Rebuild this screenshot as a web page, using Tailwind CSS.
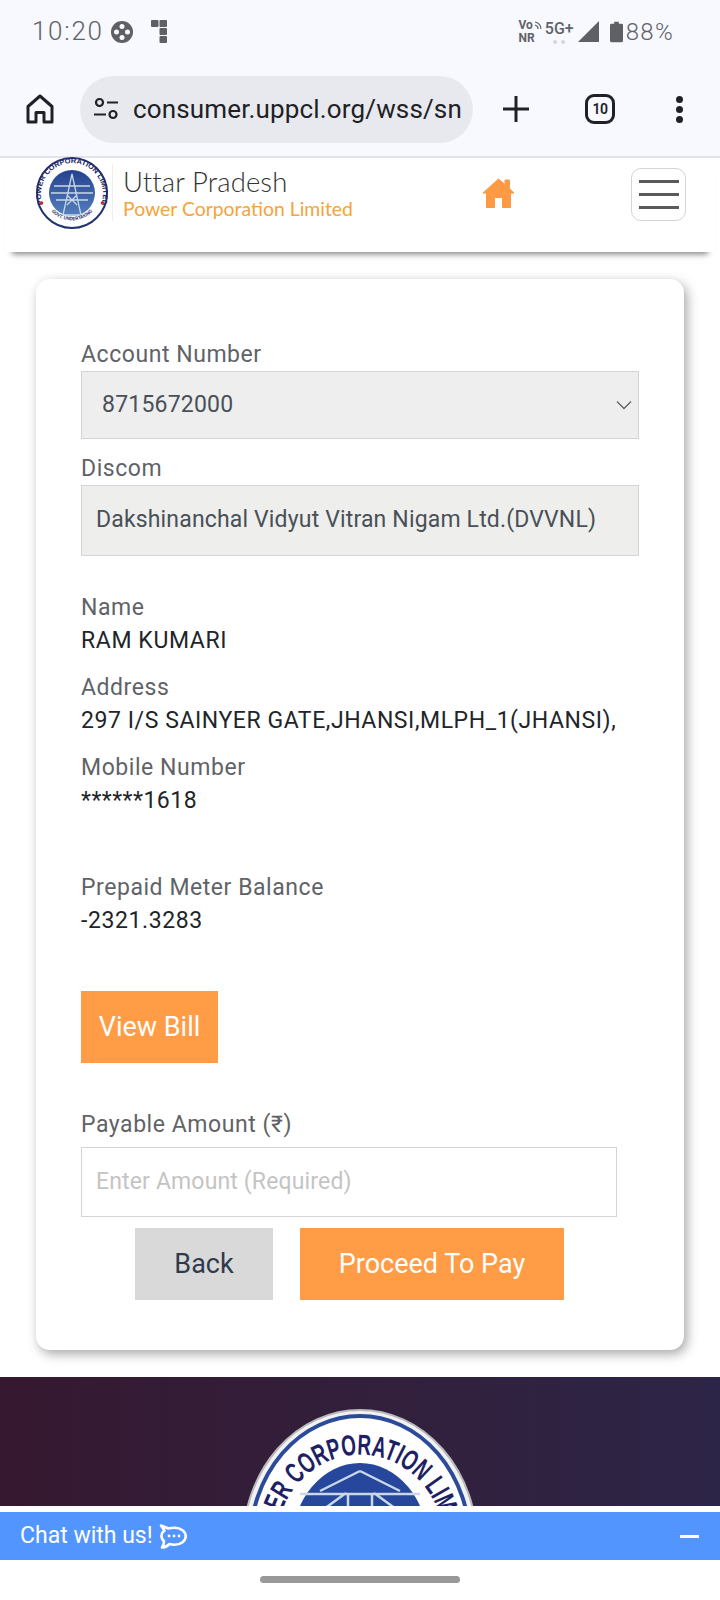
<!DOCTYPE html>
<html lang="en">
<head>
    <meta charset="UTF-8">
    <meta name="viewport" content="width=device-width, initial-scale=1.0">
    <title>Uttar Pradesh Power Corporation Limited</title>
    <script src="https://cdn.jsdelivr.net/npm/@tailwindcss/browser@4"></script>
</head>
<body class="relative h-[1600px] w-[720px] overflow-hidden bg-white font-['Roboto',sans-serif] text-[#212529]">

    <!-- phone status bar + browser toolbar -->
    <div class="h-[158px] border-b-2 border-[#e2e2e8] bg-[#f8f8ff]">
        <div class="flex h-[62px] items-center justify-between pl-[32px] pr-[46px] pt-[1px] text-[#606368]">
            <div class="flex items-center">
                <span class="text-[26px] font-light tracking-[1.700px]">10:20</span>
                <svg class="ml-[7px]" width="22" height="22" viewBox="0 0 22 22">
                    <circle cx="11" cy="11" r="11" fill="#5f6064"/>
                    <circle cx="11" cy="5.500" r="2.500" fill="#f8f8ff"/><circle cx="5.500" cy="11" r="2.500" fill="#f8f8ff"/>
                    <circle cx="16.500" cy="11" r="2.500" fill="#f8f8ff"/><circle cx="11" cy="16.500" r="2.500" fill="#f8f8ff"/>
                </svg>
                <svg class="ml-[18px]" width="16" height="23" viewBox="0 0 16 23" fill="#5f6064">
                    <rect x="0" y="0" width="7.500" height="7" rx="1"/><rect x="8.500" y="0" width="7.500" height="7" rx="1"/>
                    <rect x="8.500" y="8" width="7.500" height="7" rx="1"/><rect x="8.500" y="16" width="7.500" height="7" rx="1"/>
                </svg>
            </div>
            <div class="flex items-center">
                <div class="flex flex-col text-[12px] font-bold leading-[13px]">
                    <span class="flex items-center">Vo<svg class="ml-[1px]" width="8" height="9" viewBox="0 0 8 9" fill="none" stroke="#606368" stroke-width="1.200"><path d="M1 4a4 4 0 0 1 3 4M1 1a7 7 0 0 1 6 7"/></svg></span>
                    <span>NR</span>
                </div>
                <div class="ml-[3px] flex flex-col items-center">
                    <span class="text-[16px] font-medium leading-[17px]">5G+</span>
                    <span class="mt-[3px] flex gap-[4px]"><i class="h-[4px] w-[4px] rounded-full bg-[#d4d4da]"></i><i class="h-[4px] w-[4px] rounded-full bg-[#d4d4da]"></i></span>
                </div>
                <svg class="ml-[4px]" width="21" height="21" viewBox="0 0 21 21"><path d="M0 21 21 0V21Z" fill="#5f6064"/></svg>
                <svg class="ml-[11px]" width="13" height="22" viewBox="0 0 14 22"><path d="M4.500 0h5v2h3a1.500 1.500 0 0 1 1.500 1.500V20.500A1.500 1.500 0 0 1 12.500 22h-11A1.500 1.500 0 0 1 0 20.500V3.500A1.500 1.500 0 0 1 1.500 2h3Z" fill="#5f6064"/></svg>
                <span class="ml-[3px] text-[24px] font-light tracking-[1.300px]">88%</span>
            </div>
        </div>
        <div class="flex h-[94px] items-center">
            <svg class="ml-[26px]" width="28" height="30" viewBox="0 0 28 30" fill="none" stroke="#202124" stroke-width="3" stroke-linejoin="round">
                <path d="M2 12.500 14 2 26 12.500V28H18V18.500H10V28H2Z"/>
            </svg>
            <div class="ml-[26px] flex h-[67px] w-[393px] items-center rounded-full bg-[#e8e9ee] pl-[13px]">
                <svg width="26" height="26" viewBox="0 0 26 26" fill="none" stroke="#202124" stroke-width="2.200">
                    <circle cx="6.500" cy="6.500" r="3.500"/><path d="M14 6.500H25M1 18.500H13"/><circle cx="20" cy="18.500" r="3.500"/>
                </svg>
                <span class="ml-[14px] whitespace-nowrap text-[26px] tracking-[0.150px] text-[#202124]">consumer.uppcl.org/wss/sn</span>
            </div>
            <svg class="ml-[29px]" width="28" height="28" viewBox="0 0 28 28" stroke="#202124" stroke-width="3"><path d="M14 1V27M1 14H27"/></svg>
            <div class="ml-[55px] flex h-[30px] w-[30px] items-center justify-center rounded-[9px] border-[3px] border-[#202124] text-[14px] font-semibold tracking-[-0.5px] text-[#202124]">10</div>
            <div class="ml-[61px] flex flex-col gap-[3px]">
                <i class="h-[7px] w-[7px] rounded-full bg-[#202124]"></i><i class="h-[7px] w-[7px] rounded-full bg-[#202124]"></i><i class="h-[7px] w-[7px] rounded-full bg-[#202124]"></i>
            </div>
        </div>
    </div>

    <!-- site header -->
    <header class="relative mx-[6px] flex h-[94px] items-start bg-white shadow-[0_8px_6px_-6px_rgba(0,0,0,0.5)]">
        <svg class="ml-[30px] mt-[-1px]" width="72" height="72" viewBox="0 0 72 72">
            <defs>
                <path id="hdrTop" d="M7 48A31 31 0 1 1 65 48"/>
                <path id="hdrBottom" d="M11 48a28 28 0 0 0 50 0"/>
                <linearGradient id="hdrSeal" x1="0" x2="0" y1="0" y2="1"><stop offset="0" stop-color="#24418f"/><stop offset="1" stop-color="#5580bd"/></linearGradient>
            </defs>
            <circle cx="36" cy="36" r="35" fill="#fff" stroke="#23326f" stroke-width="2"/>
            <circle cx="36" cy="36" r="23" fill="url(#hdrSeal)"/>
            <path d="M36 17 27 58H45ZM18 29H54M15 36H57M20 43H52M31 38 41 48M41 38 31 48" fill="none" stroke="#c9d8e8" stroke-width="1.300"/>
            <text font-family="Liberation Sans" font-size="7" font-weight="700" fill="#23265f"><textPath href="#hdrTop" startOffset="50%" text-anchor="middle" textLength="118" lengthAdjust="spacingAndGlyphs">POWER CORPORATION LIMITED</textPath></text>
            <text font-family="Liberation Sans" font-size="5" font-weight="700" fill="#23265f"><textPath href="#hdrBottom" startOffset="50%" text-anchor="middle" textLength="46" lengthAdjust="spacingAndGlyphs">GOVT. UNDERTAKING</textPath></text>
            <circle cx="5.500" cy="46" r="1.800" fill="#c02b2b"/><circle cx="66.500" cy="46" r="1.800" fill="#c02b2b"/>
        </svg>
        <div class="ml-[4px] mt-[6px] w-[370px] border-l border-[#eeeeee] pl-[10px] font-['Lato',sans-serif]">
            <div class="text-[27.500px] font-light leading-[36px] tracking-[0.100px] text-[#333333]">Uttar Pradesh</div>
            <div class="mt-[-3px] text-[19.400px] leading-[24px] text-[#f6a33c]">Power Corporation Limited</div>
        </div>
        <svg class="mt-[20px]" width="33" height="30" viewBox="0 0 33 30" fill="#ff9a44" stroke="#ff9a44" stroke-linejoin="round">
            <path d="M16.500 1 23 6.500V2H27.500V10.500L32 15H28.500V29.500H20.500V19.500H12.500V29.500H4.500V15H1Z"/>
        </svg>
        <div class="ml-[116px] mt-[10px] flex h-[53px] w-[55px] flex-col items-center justify-center gap-[10px] rounded-[10px] border border-[#d4d4d4]">
            <i class="h-[3px] w-[40px] bg-[#5a5a5a]"></i><i class="h-[3px] w-[40px] bg-[#5a5a5a]"></i><i class="h-[3px] w-[40px] bg-[#5a5a5a]"></i>
        </div>
    </header>

    <!-- account card -->
    <main class="mx-[36px] mt-[27px] h-[1071px] rounded-[14px] bg-white px-[45px] pt-[60px] shadow-[3px_4px_12px_rgba(0,0,0,0.35)]">
        <label class="block text-[23px] leading-[32px] tracking-[0.550px] text-[#5f6368]">Account Number</label>
        <div class="flex h-[68px] items-center justify-between border border-[#d4d4d4] bg-[#eeeeee] pl-[20px] pr-[6px] text-[23px] tracking-[0.2px] text-[#495057]">
            8715672000
            <svg width="16" height="10" viewBox="0 0 16 10" fill="none" stroke="#5f6368" stroke-width="1.300"><path d="M1 1.500 8 8.500 15 1.500"/></svg>
        </div>
        <label class="mt-[14px] block text-[23px] leading-[32px] tracking-[0.550px] text-[#5f6368]">Discom</label>
        <div class="flex h-[71px] items-center border border-[#d4d4d4] bg-[#eeeeec] pl-[14px] text-[23px] tracking-[0.160px] text-[#495057]">Dakshinanchal Vidyut Vitran Nigam Ltd.(DVVNL)</div>

        <label class="mt-[35px] block text-[23px] leading-[33px] tracking-[0.550px] text-[#5f6368]">Name</label>
        <p class="text-[23px] leading-[33px] tracking-[0.600px] text-[#212529]">RAM KUMARI</p>
        <label class="mt-[14px] block text-[23px] leading-[33px] tracking-[0.550px] text-[#5f6368]">Address</label>
        <p class="whitespace-nowrap text-[23px] leading-[33px] tracking-[0.570px] text-[#212529]">297 I/S SAINYER GATE,JHANSI,MLPH_1(JHANSI),</p>
        <label class="mt-[14px] block text-[23px] leading-[33px] tracking-[0.550px] text-[#5f6368]">Mobile Number</label>
        <p class="text-[23px] leading-[33px] tracking-[0.500px] text-[#212529]">******1618</p>
        <label class="mt-[54px] block text-[23px] leading-[33px] tracking-[0.550px] text-[#5f6368]">Prepaid Meter Balance</label>
        <p class="text-[23px] leading-[33px] tracking-[0.600px] text-[#212529]">-2321.3283</p>

        <button class="mt-[54px] block h-[72px] w-[137px] bg-[#ff9c45] text-[27px] text-white">View Bill</button>
        <label class="mt-[45px] block text-[23px] leading-[33px] tracking-[0.550px] text-[#5f6368]">Payable Amount (₹)</label>
        <div class="mt-[6px] flex h-[70px] w-[536px] items-center border border-[#d4d4d4] pl-[14px] text-[23px] tracking-[0.150px] text-[#c4c4c4]">Enter Amount (Required)</div>
        <div class="mt-[11px] flex pl-[54px]">
            <button class="h-[72px] w-[138px] bg-[#d9d9d9] text-[27px] text-[#2f3b4d]">Back</button>
            <button class="ml-[27px] h-[72px] w-[264px] bg-[#ff9c45] text-[27px] text-white">Proceed To Pay</button>
        </div>
    </main>

    <!-- footer behind the chat bar -->
    <footer class="mt-[27px] flex h-[129px] justify-center overflow-hidden bg-gradient-to-r from-[#361830] to-[#2d2547]">
        <svg class="mt-[32px] shrink-0" width="236" height="270" viewBox="0 0 236 270">
            <defs><path id="footTop" d="M39 165A84 89 0 1 1 197 165"/></defs>
            <ellipse cx="118" cy="135" rx="117" ry="134" fill="#f2f2f2" stroke="#b9b9b9" stroke-width="2"/>
            <ellipse cx="118" cy="135" rx="110" ry="128" fill="#fff" stroke="#2b4a9a" stroke-width="4"/>
            <ellipse cx="118" cy="135" rx="68" ry="81" fill="#26479b"/>
            <path d="M58 85H178M50 99H186M118 62 78 82M118 62 158 82M106 84V110M130 84V110M104 84 82 100M132 84 154 100" fill="none" stroke="#c9d8e8" stroke-width="2.500"/>
            <text font-family="Liberation Sans" font-size="29" font-weight="700" fill="#1f1f66"><textPath href="#footTop" startOffset="50%" text-anchor="middle" textLength="298" lengthAdjust="spacingAndGlyphs">POWER CORPORATION LIMITED</textPath></text>
        </svg>
    </footer>

    <!-- chat widget -->
    <div class="absolute left-0 top-[1512px] flex h-[48px] w-full items-center justify-between bg-[#5295ff] pl-[20px] pr-[21px] text-white">
        <div class="flex items-center">
            <span class="text-[23px]">Chat with us!</span>
            <svg class="ml-[6px]" width="28" height="25" viewBox="0 0 28 25" fill="none" stroke="#fff" stroke-width="2.600" stroke-linejoin="round">
                <path d="M2 1.500 9.500 4.500C11 4 13 3.700 15.500 3.700 22 3.700 26.700 7.500 26.700 12.300 26.700 17 22 20.700 15.500 20.700 13.500 20.700 12 20.500 10.500 20 8.500 22 6 23.500 3 23.500 4.500 21.500 5 19.500 5 17 2.800 15.500 2.500 14 2.500 12 2.500 9.500 3.500 8 5.500 6.500Z"/>
                <circle cx="10" cy="12" r="1.400" fill="#fff" stroke="none"/><circle cx="15" cy="12" r="1.400" fill="#fff" stroke="none"/><circle cx="20" cy="12" r="1.400" fill="#fff" stroke="none"/>
            </svg>
        </div>
        <i class="h-[3px] w-[19px] bg-white"></i>
    </div>

    <!-- gesture pill -->
    <div class="absolute left-[260px] top-[1576px] h-[7px] w-[200px] rounded-full bg-[#999999]"></div>
</body>
</html>
